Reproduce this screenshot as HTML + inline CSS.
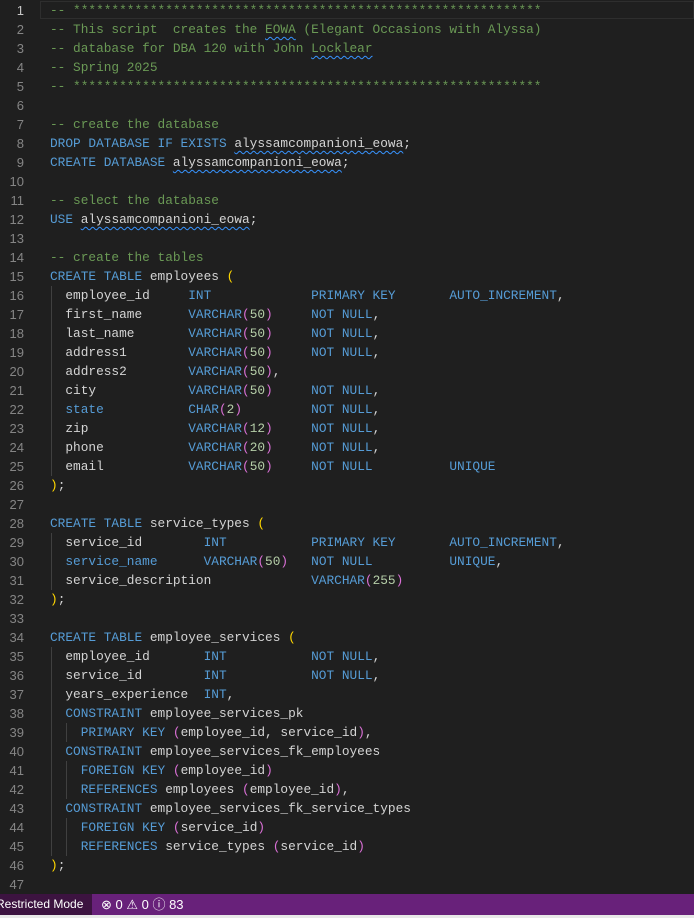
<!DOCTYPE html>
<html><head><meta charset="utf-8"><style>
html,body{margin:0;padding:0;background:#1f1f1f;width:694px;height:918px;overflow:hidden}
#ed{position:absolute;left:0;top:1px;width:694px}
.l{height:19px;line-height:19px;position:relative;font-family:"Liberation Mono",monospace;font-size:12.8px;color:#d4d4d4;white-space:pre}
.ln{position:absolute;left:0;width:24px;text-align:right;color:#858585;font-family:"Liberation Sans",sans-serif;font-size:13px}
.t{position:absolute;left:50px}
.c{color:#6a9955}.k{color:#569cd6}.p{color:#ffd700}.q{color:#da70d6}.n{color:#b5cea8}
.w{text-decoration:underline wavy #3794ff;text-decoration-thickness:1px;text-underline-offset:3px}
.g{position:absolute;left:51px;width:1px;background:#404040}
.g2{position:absolute;left:66px;width:1px;background:#404040}
#sb{position:absolute;left:0;top:894px;width:694px;height:21px;background:#68217a;font-family:"Liberation Sans",sans-serif;font-size:12px;color:#fff;line-height:21px}
#rm{position:absolute;left:0;top:0;width:92px;height:21px;background:#3c1340;text-indent:-4px}
#bt{position:absolute;left:0;top:915px;width:694px;height:3px;background:#e8e8e8}
</style></head><body>
<div class="g" style="top:286px;height:190px"></div>
<div class="g" style="top:533px;height:57px"></div>
<div class="g" style="top:647px;height:209px"></div>
<div class="g2" style="top:723px;height:19px"></div>
<div class="g2" style="top:761px;height:38px"></div>
<div class="g2" style="top:818px;height:38px"></div>
<div style="position:absolute;left:40px;top:1px;width:654px;height:18px;border:1px solid #2e2e2e;box-sizing:border-box"></div>
<div id="ed">
<div class="l"><span class="ln" style="color:#c6c6c6">1</span><span class="t c">-- *************************************************************</span></div>
<div class="l"><span class="ln">2</span><span class="t c">-- This script  creates the <span class="w">EOWA</span> (Elegant Occasions with Alyssa)</span></div>
<div class="l"><span class="ln">3</span><span class="t c">-- database for DBA 120 with John <span class="w">Locklear</span></span></div>
<div class="l"><span class="ln">4</span><span class="t c">-- Spring 2025</span></div>
<div class="l"><span class="ln">5</span><span class="t c">-- *************************************************************</span></div>
<div class="l"><span class="ln">6</span></div>
<div class="l"><span class="ln">7</span><span class="t c">-- create the database</span></div>
<div class="l"><span class="ln">8</span><span class="t"><span class="k">DROP DATABASE IF EXISTS</span> <span class="w">alyssamcompanioni_eowa</span>;</span></div>
<div class="l"><span class="ln">9</span><span class="t"><span class="k">CREATE DATABASE</span> <span class="w">alyssamcompanioni_eowa</span>;</span></div>
<div class="l"><span class="ln">10</span></div>
<div class="l"><span class="ln">11</span><span class="t c">-- select the database</span></div>
<div class="l"><span class="ln">12</span><span class="t"><span class="k">USE</span> <span class="w">alyssamcompanioni_eowa</span>;</span></div>
<div class="l"><span class="ln">13</span></div>
<div class="l"><span class="ln">14</span><span class="t c">-- create the tables</span></div>
<div class="l"><span class="ln">15</span><span class="t"><span class="k">CREATE TABLE</span> employees <span class="p">(</span></span></div>
<div class="l"><span class="ln">16</span><span class="t">  employee_id     <span class="k">INT</span>             <span class="k">PRIMARY KEY</span>       <span class="k">AUTO_INCREMENT</span>,</span></div>
<div class="l"><span class="ln">17</span><span class="t">  first_name      <span class="k">VARCHAR</span><span class="q">(</span><span class="n">50</span><span class="q">)</span>     <span class="k">NOT NULL</span>,</span></div>
<div class="l"><span class="ln">18</span><span class="t">  last_name       <span class="k">VARCHAR</span><span class="q">(</span><span class="n">50</span><span class="q">)</span>     <span class="k">NOT NULL</span>,</span></div>
<div class="l"><span class="ln">19</span><span class="t">  address1        <span class="k">VARCHAR</span><span class="q">(</span><span class="n">50</span><span class="q">)</span>     <span class="k">NOT NULL</span>,</span></div>
<div class="l"><span class="ln">20</span><span class="t">  address2        <span class="k">VARCHAR</span><span class="q">(</span><span class="n">50</span><span class="q">)</span>,</span></div>
<div class="l"><span class="ln">21</span><span class="t">  city            <span class="k">VARCHAR</span><span class="q">(</span><span class="n">50</span><span class="q">)</span>     <span class="k">NOT NULL</span>,</span></div>
<div class="l"><span class="ln">22</span><span class="t">  <span class="k">state</span>           <span class="k">CHAR</span><span class="q">(</span><span class="n">2</span><span class="q">)</span>         <span class="k">NOT NULL</span>,</span></div>
<div class="l"><span class="ln">23</span><span class="t">  zip             <span class="k">VARCHAR</span><span class="q">(</span><span class="n">12</span><span class="q">)</span>     <span class="k">NOT NULL</span>,</span></div>
<div class="l"><span class="ln">24</span><span class="t">  phone           <span class="k">VARCHAR</span><span class="q">(</span><span class="n">20</span><span class="q">)</span>     <span class="k">NOT NULL</span>,</span></div>
<div class="l"><span class="ln">25</span><span class="t">  email           <span class="k">VARCHAR</span><span class="q">(</span><span class="n">50</span><span class="q">)</span>     <span class="k">NOT NULL</span>          <span class="k">UNIQUE</span></span></div>
<div class="l"><span class="ln">26</span><span class="t"><span class="p">)</span>;</span></div>
<div class="l"><span class="ln">27</span></div>
<div class="l"><span class="ln">28</span><span class="t"><span class="k">CREATE TABLE</span> service_types <span class="p">(</span></span></div>
<div class="l"><span class="ln">29</span><span class="t">  service_id        <span class="k">INT</span>           <span class="k">PRIMARY KEY</span>       <span class="k">AUTO_INCREMENT</span>,</span></div>
<div class="l"><span class="ln">30</span><span class="t">  <span class="k">service_name</span>      <span class="k">VARCHAR</span><span class="q">(</span><span class="n">50</span><span class="q">)</span>   <span class="k">NOT NULL</span>          <span class="k">UNIQUE</span>,</span></div>
<div class="l"><span class="ln">31</span><span class="t">  service_description             <span class="k">VARCHAR</span><span class="q">(</span><span class="n">255</span><span class="q">)</span></span></div>
<div class="l"><span class="ln">32</span><span class="t"><span class="p">)</span>;</span></div>
<div class="l"><span class="ln">33</span></div>
<div class="l"><span class="ln">34</span><span class="t"><span class="k">CREATE TABLE</span> employee_services <span class="p">(</span></span></div>
<div class="l"><span class="ln">35</span><span class="t">  employee_id       <span class="k">INT</span>           <span class="k">NOT NULL</span>,</span></div>
<div class="l"><span class="ln">36</span><span class="t">  service_id        <span class="k">INT</span>           <span class="k">NOT NULL</span>,</span></div>
<div class="l"><span class="ln">37</span><span class="t">  years_experience  <span class="k">INT</span>,</span></div>
<div class="l"><span class="ln">38</span><span class="t">  <span class="k">CONSTRAINT</span> employee_services_pk</span></div>
<div class="l"><span class="ln">39</span><span class="t">    <span class="k">PRIMARY KEY</span> <span class="q">(</span>employee_id, service_id<span class="q">)</span>,</span></div>
<div class="l"><span class="ln">40</span><span class="t">  <span class="k">CONSTRAINT</span> employee_services_fk_employees</span></div>
<div class="l"><span class="ln">41</span><span class="t">    <span class="k">FOREIGN KEY</span> <span class="q">(</span>employee_id<span class="q">)</span></span></div>
<div class="l"><span class="ln">42</span><span class="t">    <span class="k">REFERENCES</span> employees <span class="q">(</span>employee_id<span class="q">)</span>,</span></div>
<div class="l"><span class="ln">43</span><span class="t">  <span class="k">CONSTRAINT</span> employee_services_fk_service_types</span></div>
<div class="l"><span class="ln">44</span><span class="t">    <span class="k">FOREIGN KEY</span> <span class="q">(</span>service_id<span class="q">)</span></span></div>
<div class="l"><span class="ln">45</span><span class="t">    <span class="k">REFERENCES</span> service_types <span class="q">(</span>service_id<span class="q">)</span></span></div>
<div class="l"><span class="ln">46</span><span class="t"><span class="p">)</span>;</span></div>
<div class="l"><span class="ln">47</span></div>
</div>
<div id="sb"><div id="rm">Restricted Mode</div><span style="position:absolute;left:101px;font-size:13px">&#x2297; 0 &#x26A0; 0 &#x24D8; 83</span></div>
<div id="bt"></div>
</body></html>
